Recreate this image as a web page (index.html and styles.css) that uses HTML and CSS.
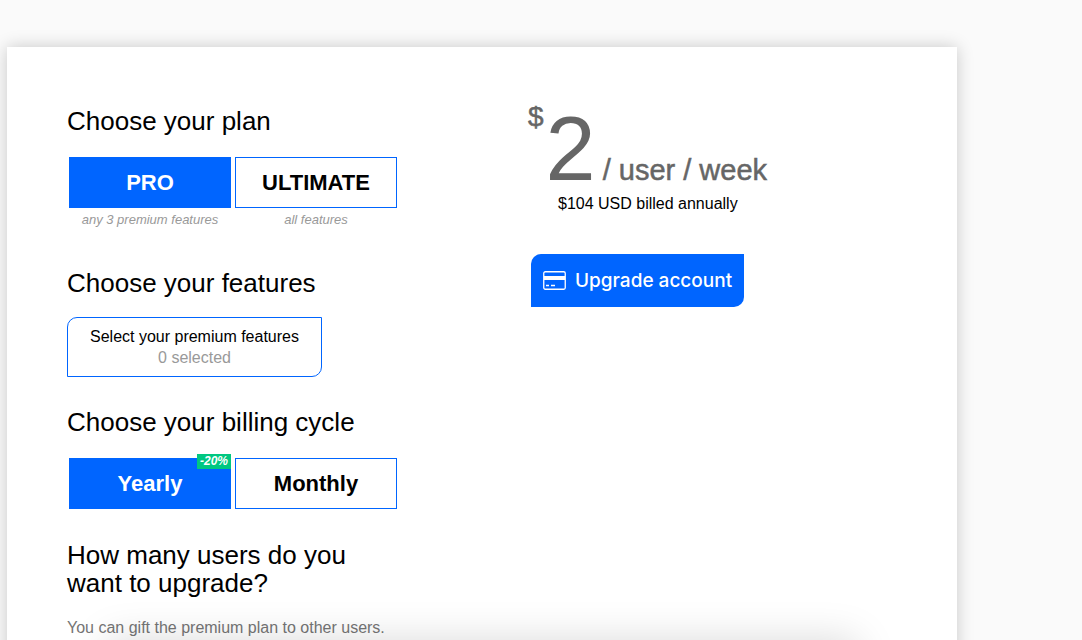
FILE: index.html
```html
<!DOCTYPE html>
<html lang="en">
<head>
<meta charset="utf-8">
<title>Upgrade account</title>
<link rel="stylesheet" href="styles.css">
</head>
<body>
<main class="card">
  <div class="config">
    <section class="plan">
      <h2 class="title">Choose your plan</h2>
      <div class="options">
        <div class="option">
          <button class="choice selected" type="button" aria-pressed="true">PRO</button>
          <p class="hint">any 3 premium features</p>
        </div>
        <div class="option">
          <button class="choice" type="button" aria-pressed="false">ULTIMATE</button>
          <p class="hint">all features</p>
        </div>
      </div>
    </section>
    <section class="features">
      <h2 class="title">Choose your features</h2>
      <button class="picker" type="button">Select your premium features<span class="count">0 selected</span></button>
    </section>
    <section class="billing">
      <h2 class="title">Choose your billing cycle</h2>
      <div class="options">
        <div class="option">
          <button class="choice selected" type="button" aria-pressed="true">Yearly<span class="badge">-20%</span></button>
        </div>
        <div class="option">
          <button class="choice" type="button" aria-pressed="false">Monthly</button>
        </div>
      </div>
    </section>
    <section class="users">
      <h2 class="title">How many users do you want to upgrade?</h2>
      <p class="note">You can gift the premium plan to other users.</p>
    </section>
  </div>
  <aside class="summary">
    <div class="price">
      <span class="currency">$</span>
      <span class="amount">2</span>
      <span class="unit">/ user / week</span>
    </div>
    <p class="billed">$104 USD billed annually</p>
    <button class="upgrade" type="button">
      <svg class="card-icon" viewBox="0 0 23 19" width="23" height="19" aria-hidden="true">
        <rect x="0.75" y="0.75" width="21.5" height="17.5" rx="1.5" fill="none" stroke="currentColor" stroke-width="1.3"/>
        <path d="M1 5h21v4H1z" fill="currentColor"/>
        <path d="M3 14.5h3M8 14.5h4" stroke="currentColor" stroke-width="1.3"/>
      </svg>
      Upgrade account
    </button>
  </aside>
</main>
<div class="bottom-bar"></div>
</body>
</html>
```
FILE: styles.css
```css
* {
  box-sizing: border-box;
}

html {
  height: 100%;
  overflow: hidden;
}

body {
  min-height: 100%;
  margin: 0;
  padding: 47px 7px 0;
  background: #fafafa;
  color: #000;
  font-family: "Liberation Sans", Arial, sans-serif;
  font-size: 16px;
}

.card {
  display: grid;
  grid-template-columns: 1fr 1fr;
  gap: 40px;
  max-width: 950px;
  padding: 60px;
  background: #fff;
  box-shadow: 0 0 16px rgba(0, 0, 0, 0.2);
}

.title {
  margin: 0;
  font-size: 26px;
  font-weight: 400;
  line-height: 28px;
}

.plan .options,
.billing .options {
  display: flex;
  gap: 4px;
  margin: 22px 0 0 2px;
}

.option {
  width: 162px;
}

.choice {
  position: relative;
  width: 100%;
  height: 51px;
  padding: 0;
  border: 1px solid #0065ff;
  background: #fff;
  color: #000;
  font-family: inherit;
  font-size: 22px;
  font-weight: 700;
  line-height: 24px;
}

.selected {
  background: #0065ff;
  color: #fff;
}

.hint {
  margin: 4px 0 0;
  color: #999;
  font-size: 13px;
  font-style: italic;
  line-height: 16px;
  text-align: center;
}

.features {
  margin-top: 41px;
}

.picker {
  width: 255px;
  height: 60px;
  margin-top: 20px;
  padding: 0;
  border: 1px solid #0065ff;
  border-radius: 10px 0;
  background: #fff;
  color: #000;
  font-family: inherit;
  font-size: 16px;
  line-height: 21px;
}

.count {
  display: block;
  color: #999;
}

.billing {
  margin-top: 31px;
}

.badge {
  position: absolute;
  top: -5px;
  right: -1px;
  padding: 0 3px;
  background: #00c781;
  font-size: 12px;
  font-style: italic;
  line-height: 15px;
}

.users {
  max-width: 330px;
  margin-top: 32px;
}

.note {
  margin: 21px 0 0;
  color: #757575;
  line-height: 20px;
}

.summary {
  padding-left: 25px;
}

.price {
  display: flex;
  align-items: baseline;
  color: #666;
}

.currency {
  align-self: flex-start;
  margin-left: 1px;
  font-size: 28px;
  line-height: 20px;
  -webkit-text-stroke: 0.5px currentColor;
}

.amount {
  margin-left: 2px;
  font-size: 90px;
  line-height: 84px;
}

.unit {
  margin-left: 7px;
  font-size: 29px;
  -webkit-text-stroke: 0.5px currentColor;
}

.billed {
  margin: 3px 0 0 31px;
  line-height: 20px;
}

.upgrade {
  display: flex;
  align-items: center;
  gap: 9px;
  height: 53px;
  margin: 40px 0 0 4px;
  padding: 0 12px;
  border: 0;
  border-radius: 10px 0;
  background: #0065ff;
  color: #fff;
  font-family: Inter, "Liberation Sans", sans-serif;
  font-size: 19px;
  font-weight: 500;
}

.bottom-bar {
  position: fixed;
  top: 100%;
  left: 107px;
  width: 750px;
  height: 60px;
  box-shadow: 0 0 40px rgba(0, 0, 0, 0.15);
}
```
